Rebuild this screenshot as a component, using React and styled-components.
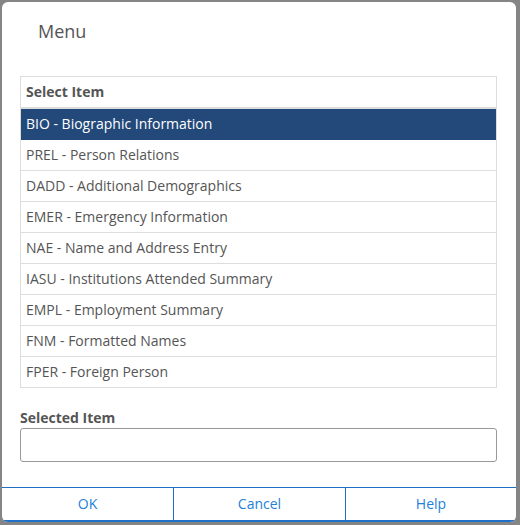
import React from 'react';
import styled, { createGlobalStyle } from 'styled-components';

const GlobalStyle = createGlobalStyle`
  html, body {
    margin: 0;
    padding: 0;
    background: #858585;
    font-family: "Open Sans", "Liberation Sans", sans-serif;
  }
`;

const Backdrop = styled.div`
  width: 520px;
  height: 525px;
  padding: 2px 0 0 2px;
  box-sizing: border-box;
  background: #858585;
  overflow: hidden;
`;

const Dialog = styled.div`
  width: 514px;
  height: 520px;
  background: #fff;
  border-radius: 6px;
  display: flex;
  flex-direction: column;
  box-sizing: border-box;
  overflow: hidden;
`;

const Header = styled.div`
  height: 74px;
  padding: 17px 0 0 36px;
  box-sizing: border-box;
  font-size: 18px;
  line-height: 24px;
  color: #555;
`;

const Body = styled.div`
  padding: 0 19px 0 18px;
  flex: 1;
`;

const List = styled.div`
  border: 1px solid #ddd;
  display: flex;
  flex-direction: column;
`;

const ListHead = styled.div`
  height: 32px;
  border-bottom: 2px solid #ddd;
  padding: 0 0 2px 5px;
  box-sizing: border-box;
  display: flex;
  align-items: center;
  font-size: 14px;
  font-weight: 700;
  color: #555;
`;

const Row = styled.div`
  height: 31px;
  padding: 0 0 2px 5px;
  box-sizing: border-box;
  display: flex;
  align-items: center;
  font-size: 14px;
  color: ${p => (p.$active ? '#fff' : '#555')};
  background: ${p => (p.$active ? '#22497a' : '#fff')};
  border-bottom: 1px solid ${p => (p.$active ? '#22497a' : '#ddd')};
  &:last-child {
    height: 30px;
    border-bottom: none;
  }
`;

const Label = styled.div`
  margin-top: 20px;
  font-size: 14px;
  font-weight: 700;
  color: #555;
  line-height: 20px;
`;

const Input = styled.div`
  height: 34px;
  border: 1px solid #999;
  border-radius: 3px;
  box-sizing: border-box;
`;

const Footer = styled.div`
  height: 35px;
  border-top: 1px solid #1e6fc6;
  border-bottom: 2px solid #1e6fc6;
  display: grid;
  grid-template-columns: 171px 172px 1fr;
  box-sizing: border-box;
`;

const Button = styled.div`
  display: flex;
  align-items: center;
  justify-content: center;
  padding-bottom: 2px;
  font-size: 14px;
  color: #2381d9;
  & + & {
    border-left: 1px solid #1e6fc6;
  }
`;

const items = [
  'BIO - Biographic Information',
  'PREL - Person Relations',
  'DADD - Additional Demographics',
  'EMER - Emergency Information',
  'NAE - Name and Address Entry',
  'IASU - Institutions Attended Summary',
  'EMPL - Employment Summary',
  'FNM - Formatted Names',
  'FPER - Foreign Person',
];

export default function App() {
  return (
    <>
      <GlobalStyle />
      <Backdrop>
        <Dialog>
          <Header>Menu</Header>
          <Body>
            <List>
              <ListHead>Select Item</ListHead>
              {items.map((it, i) => (
                <Row key={it} $active={i === 0}>{it}</Row>
              ))}
            </List>
            <Label>Selected Item</Label>
            <Input />
          </Body>
          <Footer>
            <Button>OK</Button>
            <Button>Cancel</Button>
            <Button>Help</Button>
          </Footer>
        </Dialog>
      </Backdrop>
    </>
  );
}
